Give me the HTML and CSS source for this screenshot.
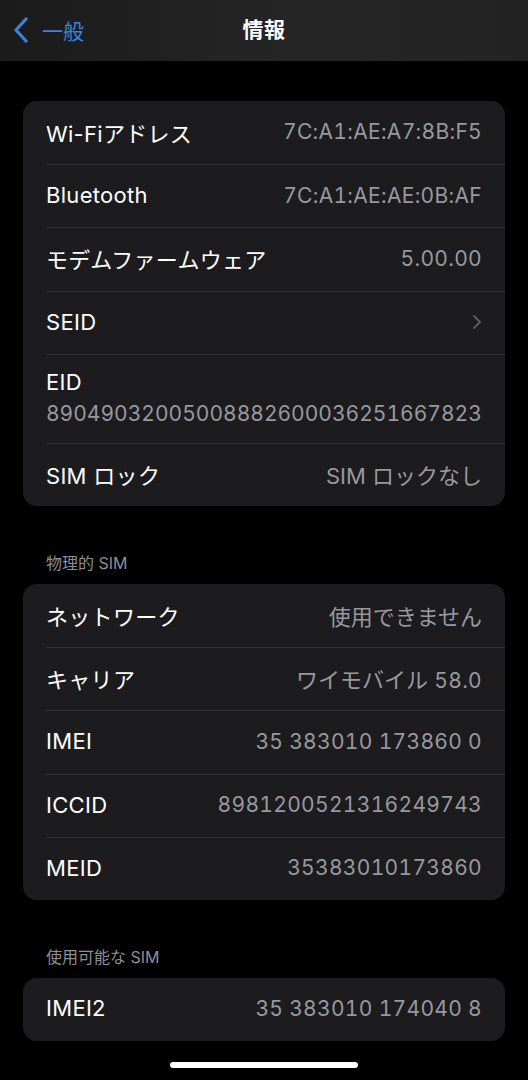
FILE: index.html
```html
<!DOCTYPE html>
<html lang="ja">
<head>
    <meta charset="UTF-8">
    <meta name="viewport" content="width=device-width, initial-scale=1.0">
    <title>情報</title>
    <link rel="stylesheet" href="styles.css">
</head>
<body>
    <header class="navbar">
        <a class="back" href="#">
            <svg class="back-icon" width="16" height="26" viewBox="0 0 16 26">
                <path d="M13 2 L3 13 L13 24" fill="none" stroke="currentColor" stroke-width="3.2" stroke-linecap="round" stroke-linejoin="round"/>
            </svg>
            <span>一般</span>
        </a>
        <h1 class="title">情報</h1>
    </header>

    <main class="content">
        <section class="group first">
            <div class="row">
                <span class="label">Wi-Fiアドレス</span>
                <span class="value num">7C:A1:AE:A7:8B:F5</span>
            </div>
            <div class="row">
                <span class="label">Bluetooth</span>
                <span class="value num">7C:A1:AE:AE:0B:AF</span>
            </div>
            <div class="row">
                <span class="label">モデムファームウェア</span>
                <span class="value num">5.00.00</span>
            </div>
            <div class="row">
                <span class="label">SEID</span>
                <svg class="chevron" width="10" height="16" viewBox="0 0 10 16">
                    <path d="M2 2 L8 8 L2 14" fill="none" stroke="currentColor" stroke-width="2" stroke-linecap="round" stroke-linejoin="round"/>
                </svg>
            </div>
            <div class="row stacked">
                <span class="label">EID</span>
                <span class="value num">89049032005008882600036251667823</span>
            </div>
            <div class="row">
                <span class="label">SIM ロック</span>
                <span class="value">SIM ロックなし</span>
            </div>
        </section>

        <h2 class="section-title">物理的 SIM</h2>
        <section class="group">
            <div class="row">
                <span class="label">ネットワーク</span>
                <span class="value">使用できません</span>
            </div>
            <div class="row">
                <span class="label">キャリア</span>
                <span class="value">ワイモバイル <span class="num">58.0</span></span>
            </div>
            <div class="row">
                <span class="label">IMEI</span>
                <span class="value num">35 383010 173860 0</span>
            </div>
            <div class="row">
                <span class="label">ICCID</span>
                <span class="value num">8981200521316249743</span>
            </div>
            <div class="row">
                <span class="label">MEID</span>
                <span class="value num">35383010173860</span>
            </div>
        </section>

        <h2 class="section-title">使用可能な SIM</h2>
        <section class="group">
            <div class="row">
                <span class="label">IMEI2</span>
                <span class="value num">35 383010 174040 8</span>
            </div>
        </section>
    </main>

    <div class="home-indicator"></div>
</body>
</html>
```

FILE: styles.css
```css
* {
    box-sizing: border-box;
}
body {
    margin: 0;
    background: #000;
    color: #fff;
    font-family: Inter, "Noto Sans CJK JP", sans-serif;
    height: 1080px;
    overflow: hidden;
    position: relative;
}
.navbar {
    height: 61px;
    padding-bottom: 5px;
    background: linear-gradient(90deg, #1b1b1b, #262626 60%, #222);
    display: flex;
    align-items: center;
    justify-content: center;
    position: relative;
}
.back {
    position: absolute;
    left: 13px;
    top: 15px;
    display: flex;
    align-items: center;
    gap: 13px;
    color: #3a84dc;
    text-decoration: none;
    font-size: 21px;
}
.back-icon {
    display: block;
}
.title {
    margin: 0;
    font-size: 21px;
    font-weight: 700;
    letter-spacing: 0.5px;
}
.content {
    padding: 40px 23px 0;
}
.group {
    background: #1c1c1e;
    border-radius: 14px;
    overflow: hidden;
}
.row {
    display: flex;
    justify-content: space-between;
    align-items: center;
    height: 63.2px;
    margin-left: 23px;
    padding-right: 23px;
    padding-bottom: 2px;
    border-top: 1px solid #323234;
    font-size: 22px;
}
.group .row:first-child {
    border-top: none;
}
.row.stacked {
    flex-direction: column;
    align-items: flex-start;
    justify-content: center;
    height: 89px;
    gap: 6px;
}
.label {
    color: #fff;
    letter-spacing: 0.3px;
}
.value {
    color: #98989e;
}
.num {
    font-size: 21px;
    font-variant-numeric: tabular-nums;
    letter-spacing: 0.3px;
}
.stacked .num {
    letter-spacing: 0;
}
.chevron {
    color: #5c5c60;
}
.section-title {
    margin: 46px 0 10px 23px;
    font-size: 16px;
    line-height: 22px;
    font-weight: 400;
    color: #8e8e93;
}
.home-indicator {
    position: absolute;
    left: 170px;
    top: 1062px;
    width: 188px;
    height: 6px;
    border-radius: 3px;
    background: #fff;
}
```
